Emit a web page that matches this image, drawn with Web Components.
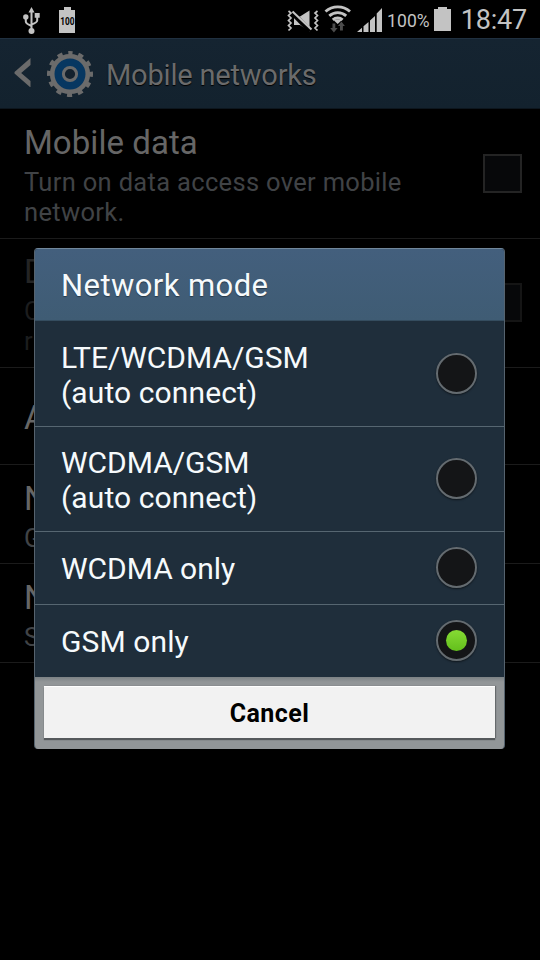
<!DOCTYPE html>
<html lang="en">
<head>
<meta charset="utf-8">
<title>Mobile networks</title>
<style>
html,body{margin:0;background:#000}
body{width:540px;height:960px;overflow:hidden;font-family:Roboto,"Liberation Sans",sans-serif}
</style>
</head>
<body>
<phone-screen></phone-screen>
<script>
const define = (name, html) => {
  const tpl = document.createElement('template');
  tpl.innerHTML = html;
  customElements.define(name, class extends HTMLElement {
    constructor() {
      super();
      this.attachShadow({mode: 'open'}).append(tpl.content.cloneNode(true));
    }
  });
};

define('status-bar', `
<style>
:host{display:flex;height:38px;background:#000;color:#c3c3c3;box-sizing:border-box}
svg{display:block;width:540px;height:38px;grid-area:1/1}
.bar{display:grid;width:540px;height:38px}
.texts{grid-area:1/1;display:flex;justify-content:flex-end;align-items:center;padding-right:13px}
.pct{font-size:17.500px;letter-spacing:.1px;margin-right:31px;padding-top:3px}
.time{font-size:27px;letter-spacing:-.2px;padding-top:1px}
</style>
<div class="bar">
<svg viewBox="0 0 540 38" fill="#c3c3c3">
  <g stroke="#c3c3c3" stroke-width="2" fill="none">
    <path d="M31.500 10V31M25.800 18v3.600q0 2.200 5.700 4.400M37.200 16v4.500q0 2-5.700 4"/>
  </g>
  <path d="M31.500 7l3 5.500h-6zM34.700 13h5v4.700h-5z"/><circle cx="25.800" cy="17" r="2.700"/><circle cx="31.500" cy="31" r="3"/>
  <path d="M64 7h7v3h4v23H59V10h5z"/>
  <text x="60.200" y="25.300" font-family="Roboto" font-weight="700" font-size="11" fill="#000" textLength="14.200" lengthAdjust="spacingAndGlyphs">100</text>
  <path d="M294 16.500h6l9.500-6v21l-9.500-6.500h-6z"/>
  <path d="M291 11.500l19 19.500" stroke="#000" stroke-width="5"/>
  <path d="M292.500 11.500l19 18" stroke="#c3c3c3" stroke-width="2.100"/>
  <g fill="none" stroke="#c3c3c3" stroke-width="1.700">
    <path d="M288.500 11l2.500 2-2.500 2.500 2.500 2.500-2.500 2.500 2.500 2.500-2.500 2.500 2.500 2.500-2.500 2.500M317.500 11l-2.500 2 2.500 2.500-2.500 2.500 2.500 2.500-2.500 2.500 2.500 2.500-2.500 2.500 2.500 2.500"/>
  </g>
  <g fill="none" stroke="#c3c3c3" stroke-width="2.900">
    <path d="M325.500 11.500a18.500 18.500 0 0 1 24.500 0M329.300 15.800a12.800 12.800 0 0 1 16.900 0M332.800 19.800a7.500 7.500 0 0 1 9.800 0"/>
  </g>
  <path d="M334 20.500q3.700-2.500 7.400 0L337.700 24z"/>
  <path d="M332.500 23.500h2.800v4.500h2.300l-3.700 4.500-3.700-4.500h2.300zM340 30.500h2.900V26h2l-3.500-4.500L338 26h2z" fill="#4c4c4c"/>
  <path d="M357 32l5-4.300V32zM363.500 26.300l5-4.300v10h-5zM370 20.500l5-4.500v16h-5zM376.700 13.600l5.300-5.600v24h-5.300z"/>
  <path d="M438 7h9v2h4v22h-17V9h4z"/>
</svg>
<div class="texts"><span class="pct">100%</span><span class="time">18:47</span></div>
</div>`);

define('gear-icon', `
<style>:host{display:block;width:48px;height:48px}svg{display:block}</style>
<svg width="48" height="48" viewBox="-24 -24 48 48">
  <circle r="21" fill="none" stroke="#6b6b6b" stroke-width="4" stroke-dasharray="5.200 5.796" stroke-dashoffset="2.600" transform="rotate(-90)"/>
  <circle r="17.800" fill="#073761" stroke="#6b6b6b" stroke-width="4.600"/>
  <circle r="6.600" fill="#14212d" stroke="#6b6b6b" stroke-width="3"/>
</svg>`);

define('action-bar', `
<style>
:host{display:flex;height:71px;box-sizing:border-box;background:linear-gradient(#152431,#13222e);border-top:1px solid #203040;border-bottom:1px solid #0d161e;align-items:center;color:#6b6b6b;font-size:29px;letter-spacing:-.2px;padding-left:14px}
svg{display:block;width:18px;height:30px;margin-bottom:3px}
gear-icon{margin:0 12px 0 14px}
.title{padding-top:2px;text-shadow:0 1px 1px #000}
</style>
<svg viewBox="0 0 18 30"><path d="M16.500 1V8L7.200 16 16.500 24V30.500L.5 16.500V15z" fill="#6b6b6b"/></svg>
<gear-icon></gear-icon><div class="title"><slot></slot></div>`);

define('setting-row', `
<style>
:host{display:flex;box-sizing:border-box;height:var(--h);border-bottom:1px solid #1b1b1b;padding:var(--pt,0) 18px 0 24px;justify-content:space-between;align-items:flex-start;white-space:nowrap}
.copy{display:flex;flex-direction:column}
::slotted(b){font-weight:400;font-size:33px;line-height:39px;letter-spacing:.05px;color:var(--title,#666);margin-bottom:5px}
::slotted(span){font-size:25.500px;line-height:30px;letter-spacing:.32px;color:var(--sub,#404346)}
</style>
<div class="copy"><slot></slot></div><slot name="end"></slot>`);

define('check-box', `
<style>:host{display:block;width:39px;height:39px;box-sizing:border-box;border:2px solid var(--edge,#242424);background:#07080a;margin-top:var(--mt,31px)}</style>`);

define('radio-dot', `
<style>
:host{display:grid;place-items:center;width:41px;height:41px;box-sizing:border-box;border:2px solid #646b70;border-radius:50%;background:#141517;box-shadow:0 1px 2px #0008;margin-bottom:var(--lift,0)}
i{display:none;width:21px;height:21px;border-radius:50%;background:linear-gradient(#86db34,#63bf1c)}
:host([checked]) i{display:block}
</style><i></i>`);

define('mode-option', `
<style>
:host{display:flex;box-sizing:border-box;height:var(--h);justify-content:space-between;align-items:center;padding:0 27.500px 0 26px;border-bottom:1px solid #566671;font-size:30px;line-height:35px;color:#f6fafc;letter-spacing:var(--ls,-.04px)}
:host(:last-of-type){border-bottom:0}
.label{padding-top:var(--pt,2px)}
</style><div class="label"><slot></slot></div><slot name="end"></slot>`);

define('mode-dialog', `
<style>
:host{display:flex;flex-direction:column;width:471px;height:501px;box-sizing:border-box;border:1px solid #56636e;border-top-color:#71879b;border-bottom:0;border-radius:4px;overflow:hidden;background:#1f2e3b}
header{box-sizing:border-box;height:72px;padding:1px 26px 0;display:flex;align-items:center;font-size:31px;letter-spacing:.42px;color:#f6fafc;text-shadow:0 1px 1px #0006;background:linear-gradient(#435f7d,#3f5c74);border-bottom:1px solid #354d5f}
footer{flex:1;box-sizing:border-box;padding:9px 9px 0;background:linear-gradient(#7c8285,#929698 5px)}
.btn{box-sizing:border-box;height:52px;display:flex;align-items:center;justify-content:center;background:#f2f2f2;border-top:1px solid #fff;color:#000;font-weight:700;font-size:25px;letter-spacing:.45px;padding-top:1px;box-shadow:0 2px 1px #55595c,1px 0 1px #6a6e70}
</style>
<header><slot name="title"></slot></header>
<slot></slot>
<footer><div class="btn"><slot name="action"></slot></div></footer>`);

define('phone-screen', `
<style>
:host{display:block;position:relative;width:540px;height:960px;background:#000;overflow:hidden}
mode-dialog{position:absolute;left:34px;top:248px}
</style>
<status-bar></status-bar>
<action-bar>Mobile networks</action-bar>
<setting-row style="--h:130px;--pt:14px"><b>Mobile data</b><span>Turn on data access over mobile</span><span>network.</span><check-box slot="end"></check-box></setting-row>
<setting-row style="--h:129px;--pt:13px;--title:#242424;--sub:#1c1d1e"><b>D</b><span>C</span><span>r</span><check-box slot="end" style="--edge:#151515"></check-box></setting-row>
<setting-row style="--h:97px;--pt:30px"><b>A</b></setting-row>
<setting-row style="--h:99px;--pt:14px"><b>N</b><span>G</span></setting-row>
<setting-row style="--h:99px;--pt:14px"><b>N</b><span>S</span></setting-row>
<mode-dialog>
  <span slot="title">Network mode</span>
  <mode-option style="--h:106px"><span>LTE/WCDMA/GSM</span><br><span style="letter-spacing:.1px">(auto connect)</span><radio-dot slot="end"></radio-dot></mode-option>
  <mode-option style="--h:105px;--lift:1px"><span>WCDMA/GSM</span><br><span style="letter-spacing:.1px">(auto connect)</span><radio-dot slot="end"></radio-dot></mode-option>
  <mode-option style="--h:73px;--lift:2px;--pt:1px"><span>WCDMA only</span><radio-dot slot="end"></radio-dot></mode-option>
  <mode-option style="--h:72px;--lift:2px;--pt:1px;--ls:.1px"><span>GSM only</span><radio-dot slot="end" checked></radio-dot></mode-option>
  <span slot="action">Cancel</span>
</mode-dialog>`);
</script>
</body>
</html>
